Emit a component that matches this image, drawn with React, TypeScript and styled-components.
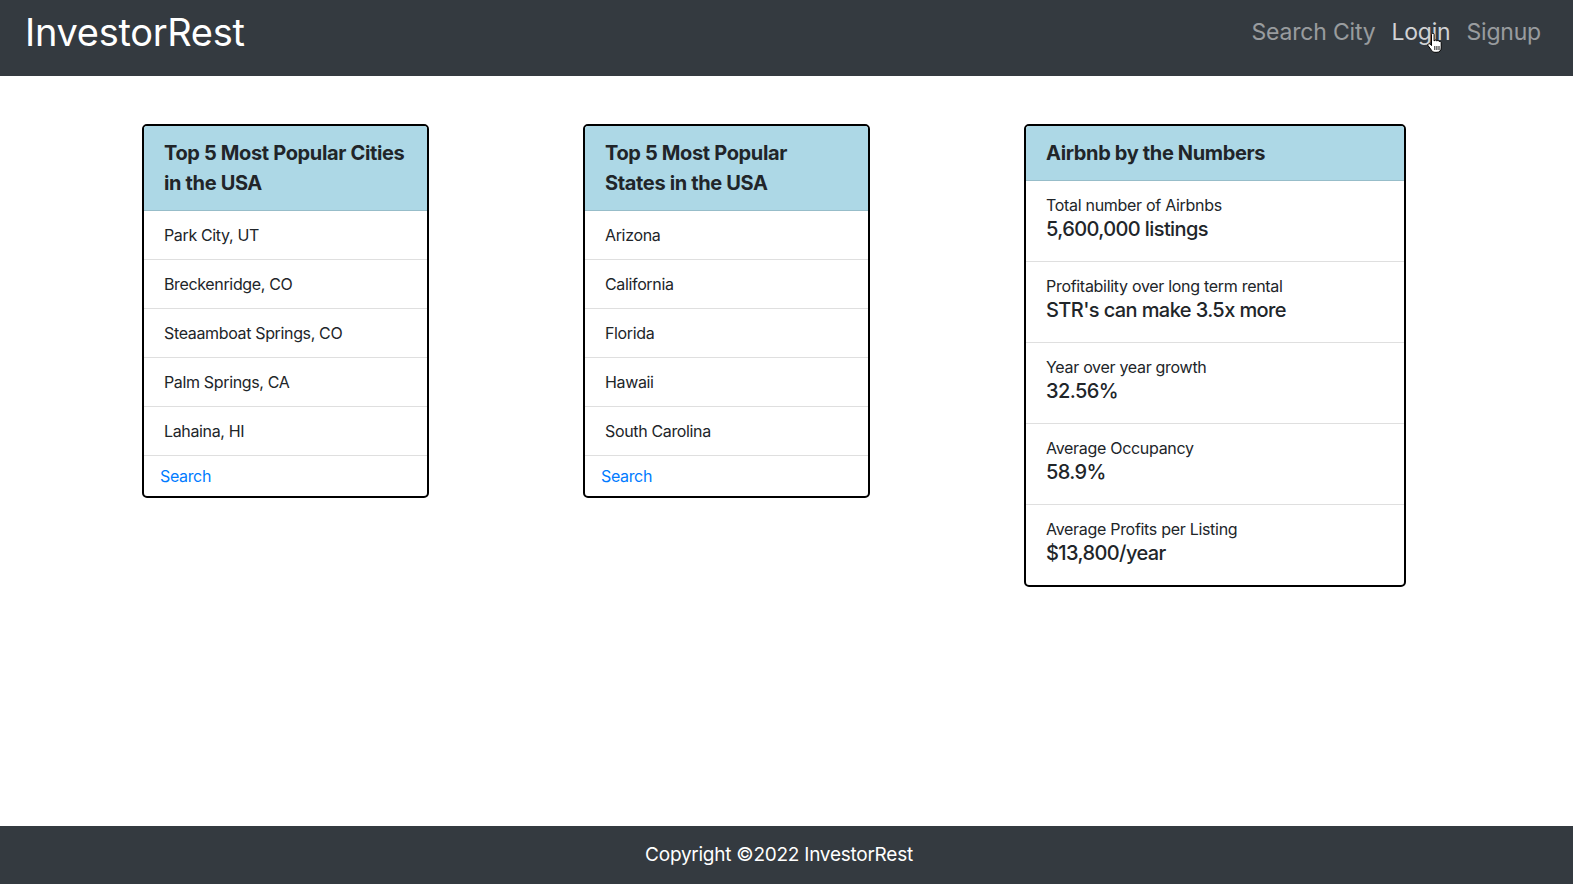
import React from "react";
import styled, { createGlobalStyle } from "styled-components";

const GlobalStyle = createGlobalStyle`
  * { box-sizing: border-box; }
  body {
    margin: 0;
    font-family: Inter, "Noto Sans", "Liberation Sans", sans-serif;
    color: #212529;
    background: #fff;
  }
`;

const Page = styled.div`
  min-height: 100vh;
  display: flex;
  flex-direction: column;
`;

const Navbar = styled.nav`
  height: 76px;
  background: #343a40;
  display: flex;
  align-items: center;
  justify-content: space-between;
  padding: 0 24px 12px 25px;
`;

const Brand = styled.a`
  font-size: 38px;
  line-height: 44px;
  color: #fff;
  text-decoration: none;
  letter-spacing: -0.3px;
`;

const NavLinks = styled.div`
  display: flex;
  align-items: center;
`;

const NavLink = styled.a<{ $active?: boolean }>`
  display: block;
  font-size: 23px;
  line-height: 28px;
  padding: 0 8px;
  color: ${(p) => (p.$active ? "rgba(255,255,255,0.78)" : "rgba(255,255,255,0.5)")};
  text-decoration: none;
  letter-spacing: -0.2px;
  position: relative;
`;

const Cursor = styled.svg`
  position: absolute;
  left: 44px;
  top: 15px;
  width: 15px;
  height: 20px;
`;

const Main = styled.main`
  flex: 1;
  display: flex;
  align-items: flex-start;
  gap: 154px;
  padding: 48px 0 48px 142px;
`;

const Card = styled.section<{ $width: number }>`
  width: ${(p) => p.$width}px;
  border: 2px solid #000;
  border-radius: 5px;
  overflow: hidden;
  background: #fff;
`;

const CardHeader = styled.h2`
  margin: 0;
  background: #add8e6;
  padding: 12px 20px;
  font-size: 20px;
  line-height: 30px;
  font-weight: 700;
  letter-spacing: -0.35px;
  color: #212529;
  border-bottom: 1px solid rgba(0, 0, 0, 0.125);
`;

const List = styled.ul`
  list-style: none;
  margin: 0;
  padding: 0;
`;

const ListItem = styled.li`
  padding: 12px 20px;
  font-size: 16px;
  line-height: 24px;
  border-bottom: 1px solid rgba(0, 0, 0, 0.125);
  letter-spacing: -0.35px;
`;

const CardFooter = styled.div`
  padding: 8px 16px;
  font-size: 16px;
  line-height: 24px;
  letter-spacing: -0.35px;
`;

const SearchLink = styled.a`
  color: #007bff;
  text-decoration: none;
`;

const StatItem = styled.li`
  padding: 12px 20px;
  border-bottom: 1px solid rgba(0, 0, 0, 0.125);
  &:last-child { border-bottom: none; }
`;

const StatLabel = styled.div`
  font-size: 16px;
  line-height: 24px;
  letter-spacing: -0.3px;
`;

const StatValue = styled.div`
  font-size: 20px;
  line-height: 24px;
  font-weight: 500;
  margin-bottom: 8px;
  letter-spacing: -0.6px;
`;

const Footer = styled.footer`
  height: 58px;
  background: #343a40;
  color: #fff;
  display: flex;
  align-items: center;
  justify-content: center;
  font-size: 19px;
  padding: 0 15px 1px 0;
  letter-spacing: -0.25px;
`;

const cities = ["Park City, UT", "Breckenridge, CO", "Steaamboat Springs, CO", "Palm Springs, CA", "Lahaina, HI"];
const states = ["Arizona", "California", "Florida", "Hawaii", "South Carolina"];
const stats = [
  ["Total number of Airbnbs", "5,600,000 listings"],
  ["Profitability over long term rental", "STR's can make 3.5x more"],
  ["Year over year growth", "32.56%"],
  ["Average Occupancy", "58.9%"],
  ["Average Profits per Listing", "$13,800/year"],
];

const ListCard: React.FC<{ title: string; items: string[] }> = ({ title, items }) => (
  <Card $width={287}>
    <CardHeader>{title}</CardHeader>
    <List>
      {items.map((i) => (
        <ListItem key={i}>{i}</ListItem>
      ))}
    </List>
    <CardFooter>
      <SearchLink href="#">Search</SearchLink>
    </CardFooter>
  </Card>
);

export default function App() {
  return (
    <Page>
      <GlobalStyle />
      <Navbar>
        <Brand href="#">InvestorRest</Brand>
        <NavLinks>
          <NavLink href="#">Search City</NavLink>
          <NavLink href="#" $active>
            Login
            <Cursor viewBox="0 0 14 20">
              <path
                d="M4 1.5c0-.8.6-1.3 1.3-1.3s1.3.5 1.3 1.3V8l.3-.1c.2-.7.8-1 1.4-.9.6.1 1 .6 1 1.1l.2-.1c.3-.5.9-.7 1.4-.5.5.2.8.6.8 1.1.4-.3 1-.3 1.4 0 .4.3.6.7.6 1.2V15c0 2.4-1.8 4.3-4.2 4.3H7.5c-1.3 0-2.4-.6-3.2-1.6L.7 12.8c-.5-.6-.4-1.4.2-1.8.6-.4 1.3-.3 1.8.2L4 12.6V1.5z"
                fill="#fff"
                stroke="#000"
                strokeWidth="1"
              />
              <path d="M7.3 13v4M9.4 13v4M11.5 13v4" stroke="#000" strokeWidth="0.9" />
            </Cursor>
          </NavLink>
          <NavLink href="#">Signup</NavLink>
        </NavLinks>
      </Navbar>
      <Main>
        <ListCard title="Top 5 Most Popular Cities in the USA" items={cities} />
        <ListCard title="Top 5 Most Popular States in the USA" items={states} />
        <Card $width={382}>
          <CardHeader>Airbnb by the Numbers</CardHeader>
          <List>
            {stats.map(([label, value]) => (
              <StatItem key={label}>
                <StatLabel>{label}</StatLabel>
                <StatValue>{value}</StatValue>
              </StatItem>
            ))}
          </List>
        </Card>
      </Main>
      <Footer>Copyright ©2022 InvestorRest</Footer>
    </Page>
  );
}
